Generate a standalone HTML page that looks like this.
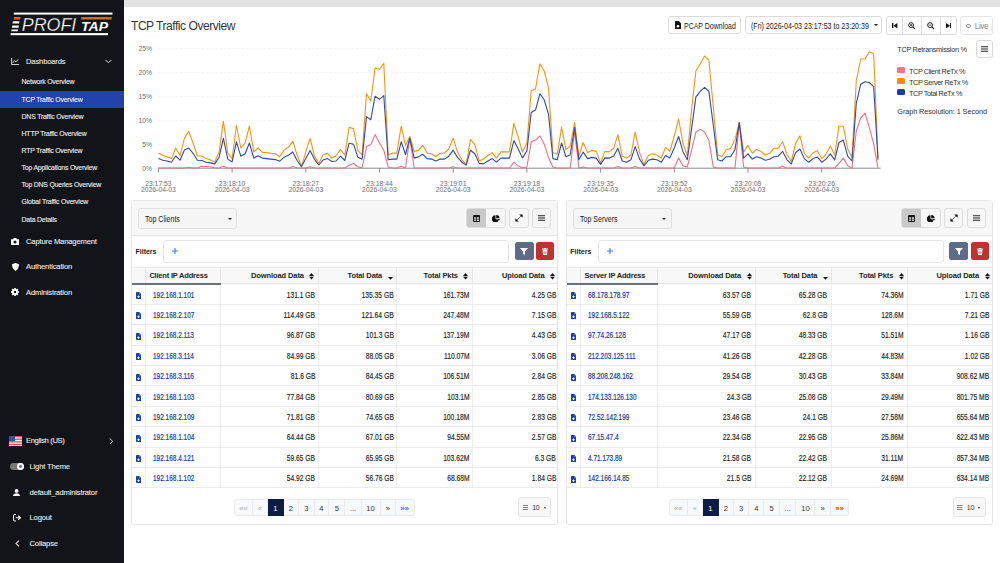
<!DOCTYPE html>
<html><head><meta charset="utf-8"><style>
*{box-sizing:border-box}
html,body{margin:0;padding:0}
body{width:1000px;height:563px;overflow:hidden;position:relative;background:#fff;font-family:"Liberation Sans", sans-serif;color:#333}
.sb{position:absolute;left:0;top:0;width:123.8px;height:563px;background:#131419;color:#ececec}
.sb .it{position:absolute;left:21.6px;font-size:6.9px;letter-spacing:-0.2px;white-space:nowrap;line-height:10px;-webkit-text-stroke:0.12px #ececec}
.sb .mi{position:absolute;left:26px;font-size:7.6px;letter-spacing:-0.15px;white-space:nowrap;line-height:10px;-webkit-text-stroke:0.1px #ececec}
.topstrip{position:absolute;left:123.8px;top:0;width:877px;height:6.6px;background:#e2e2e2}
.title{position:absolute;left:131px;top:16px;font-size:12px;letter-spacing:-0.45px;color:#333;white-space:nowrap;line-height:20px}
.obtn{position:absolute;top:16.3px;height:18px;border:1px solid #dcdcdc;border-radius:3px;background:#fff;font-size:7.9px;color:#222;white-space:nowrap;line-height:16px}
.card{position:absolute;top:200px;height:324.5px;border:1px solid #e7e7e7;border-radius:3px;background:#fff;overflow:hidden}
.chead{position:absolute;left:0;top:0;right:0;height:35.2px;background:#f7f7f7;border-bottom:1px solid #e3e3e3}
.sel{position:absolute;left:6.3px;top:7px;width:98.7px;height:20.5px;border:1px solid #e0e0e0;border-radius:3px;background:#f5f5f5;font-size:8.5px;color:#222;line-height:21.2px;padding-left:5.5px;white-space:nowrap}
.st{display:inline-block;transform:scaleX(0.83);transform-origin:0 50%}
.caret{position:absolute;right:4.6px;top:8.6px;width:0;height:0;border-left:2.2px solid transparent;border-right:2.2px solid transparent;border-top:2.5px solid #222}
.bgrp{position:absolute;left:334px;top:7.2px;width:39.5px;height:19.8px;border:1px solid #dcdcdc;border-radius:3px;overflow:hidden;background:#f7f7f7}
.bgrp .b{position:absolute;top:0;height:100%;width:19px;display:flex;align-items:center;justify-content:center;padding-top:0.5px}
.bgrp .b.act{left:0;background:#c9c9c9}
.bgrp .b:not(.act){left:19px;padding-left:1px}
.btn1{position:absolute;top:7.2px;width:19px;height:19.8px;border:1px solid #dcdcdc;border-radius:3px;display:flex;align-items:center;justify-content:center}
.flab{position:absolute;left:3.3px;top:46.2px;font-size:7px;font-weight:bold;color:#222;line-height:10px}
.finput{position:absolute;left:30.5px;top:39px;height:22.5px;border:1px solid #e6e6e6;border-radius:3px;background:#fff}
.plus{position:absolute;left:8.3px;top:7.4px}
.fbtn{position:absolute;top:41.4px;width:19px;height:17.5px;border-radius:2.5px;background:#5f6b87;display:flex;align-items:center;justify-content:center}
.tbtn{position:absolute;top:41.4px;width:18px;height:17.5px;border-radius:2.5px;background:#c0312f;display:flex;align-items:center;justify-content:center}
.thead{position:absolute;left:0;right:0;top:65.7px;height:17.7px;background:#f8f8f8;border-top:1px solid #ececec;border-bottom:1px solid #e3e3e3}
.th{position:absolute;top:0;height:100%;font-size:7.5px;font-weight:bold;letter-spacing:-0.1px;color:#222;text-align:right;padding-right:13.8px;line-height:16.3px;border-right:1px solid #e6e6e6;white-space:nowrap}
.th.l{text-align:left;padding-left:3.5px;padding-right:0;letter-spacing:-0.2px}
.th.e{padding:0}
.uline{position:absolute;left:0;top:82.3px;height:2px;background:#6a7178}
.tr{position:absolute;left:0;right:0;height:20.4px;border-bottom:1px solid #ebebeb}
.td{position:absolute;top:0;height:100%;border-right:1px solid #efefef;white-space:nowrap;line-height:21px}
.td.ic{display:flex;align-items:center;justify-content:center;padding-top:2.5px;padding-left:0.3px}
.td.ip{font-size:8.2px;color:#22409e;padding-left:6.8px;-webkit-text-stroke:0.2px #22409e}
.td.ip .t{display:inline-block;transform:scaleX(0.79);transform-origin:0 50%}
.td.num{font-size:8.3px;color:#222;text-align:right;padding-right:2.2px;-webkit-text-stroke:0.15px #222}
.card.r .td.num{padding-right:3.9px}
.td.num .t{display:inline-block;transform:scaleX(0.81);transform-origin:100% 50%}
.pag{position:absolute;left:101.8px;top:298px;height:16.6px;width:181px}
.pi{position:absolute;top:0;height:16.6px;background:#f8f9fa;border:1px solid #ececec;border-left:none;font-size:7.6px;color:#333;text-align:center;line-height:17.4px}
.pi.dis{color:#aaa}
.pi.act{background:#0c1c45;color:#fff;border-color:#0c1c45}
.pp{position:absolute;top:296px;width:33px;height:19.8px;background:#f7f7f7;border:1px solid #e6e6e6;border-radius:3px;font-size:7.2px;color:#333;line-height:17px}
.pp svg{position:absolute;left:3.3px;top:6.8px}
.pp span{position:absolute;left:12.8px;top:0.5px;font-size:7px;letter-spacing:-0.2px}
.pp .c2{left:24.5px !important;top:9px !important;width:0;height:0;border-left:1.6px solid transparent;border-right:1.6px solid transparent;border-top:2px solid #333}
.leg{position:absolute;left:909px;font-size:7.3px;letter-spacing:-0.42px;color:#333;white-space:nowrap;line-height:10px}
.sq{position:absolute;left:897.3px;width:7.8px;height:6px;border-radius:1.5px}
</style></head><body>
<div class="sb">
<svg style="position:absolute;left:0;top:0" width="123" height="40" viewBox="0 0 123 40">
<rect x="13.8" y="12.6" width="98.7" height="2" fill="#fff"/>
<path d="M14.2,17.1 H20.6 L20.2,19.4 H13.8 Z" fill="#e8601c"/>
<path d="M81.4,17.1 H111.8 L111.4,19.4 H81 Z" fill="#e8601c"/>
<path d="M12.9,21.3 H19.5 L19.2,23.5 H12.5 Z M12.3,25.6 H18.9 L18.6,27.8 H11.9 Z M11.6,29.4 H18.2 L17.9,31.3 H11.2 Z" fill="#fff"/>
<text x="21.8" y="31.3" font-family='"Liberation Sans", sans-serif' font-style="italic" font-size="18" fill="#fff" stroke="#131419" stroke-width="0.3" textLength="54.5" lengthAdjust="spacingAndGlyphs">PROFI</text>
<text x="81" y="31" font-family='"Liberation Sans", sans-serif' font-style="italic" font-weight="bold" font-size="12" fill="#fff" textLength="27" lengthAdjust="spacingAndGlyphs">TAP</text>
<rect x="10.6" y="33.1" width="97.4" height="2.1" fill="#fff"/>
</svg>
<svg style="position:absolute;left:11px;top:57.7px" width="8" height="7" viewBox="0 0 9 8"><path d="M0.6,0 V7.4 H9" stroke="#ddd" stroke-width="1.1" fill="none"/><path d="M2,5.5 L4,3 L5.6,4.4 L8.2,1.5" stroke="#ddd" stroke-width="1.1" fill="none"/></svg>
<div class="mi" style="top:56.7px">Dashboards</div>
<svg style="position:absolute;left:105.3px;top:59px" width="7" height="5" viewBox="0 0 7 5"><path d="M0.5,0.8 L3.5,3.8 L6.5,0.8" stroke="#ddd" stroke-width="1" fill="none"/></svg>
<div style="position:absolute;left:0;top:90.6px;width:123.8px;height:17.3px;background:#2143ab"></div>
<div class="it" style="top:77.4px">Network Overview</div>
<div class="it" style="top:94.9px">TCP Traffic Overview</div>
<div class="it" style="top:111.9px">DNS Traffic Overview</div>
<div class="it" style="top:129.2px">HTTP Traffic Overview</div>
<div class="it" style="top:146.2px">RTP Traffic Overview</div>
<div class="it" style="top:163.4px">Top Applications Overview</div>
<div class="it" style="top:180.4px">Top DNS Queries Overview</div>
<div class="it" style="top:197.4px">Global Traffic Overview</div>
<div class="it" style="top:214.7px">Data Details</div>
<svg style="position:absolute;left:11px;top:237.5px" width="8" height="7" viewBox="0 0 8 7"><path d="M0,1.8 Q0,1.2 0.6,1.2 H2 L2.8,0 H5.2 L6,1.2 H7.4 Q8,1.2 8,1.8 V6.4 Q8,7 7.4,7 H0.6 Q0,7 0,6.4 Z" fill="#fff"/><circle cx="4" cy="4.1" r="1.5" fill="#131419"/></svg>
<div class="mi" style="top:236.5px">Capture Management</div>
<svg style="position:absolute;left:11.5px;top:262.5px" width="7" height="8" viewBox="0 0 7 8"><path d="M3.5,0 L7,1.3 Q7,6 3.5,8 Q0,6 0,1.3 Z" fill="#fff"/></svg>
<div class="mi" style="top:261.5px">Authentication</div>
<svg style="position:absolute;left:11px;top:288px" width="8" height="8" viewBox="0 0 8 8"><g fill="#fff"><circle cx="4" cy="4" r="2.9"/><rect x="3.2" y="0" width="1.6" height="8"/><rect x="0" y="3.2" width="8" height="1.6"/><rect x="3.2" y="0" width="1.6" height="8" transform="rotate(45 4 4)"/><rect x="3.2" y="0" width="1.6" height="8" transform="rotate(-45 4 4)"/></g><circle cx="4" cy="4" r="1.2" fill="#131419"/></svg>
<div class="mi" style="top:287.5px">Administration</div>
<svg style="position:absolute;left:8.8px;top:435.6px" width="13" height="10.3" viewBox="0 0 13 10.3"><rect width="13" height="10.3" fill="#eee"/><g fill="#d9534f"><rect y="0" width="13" height="1.3"/><rect y="2.6" width="13" height="1.3"/><rect y="5.2" width="13" height="1.3"/><rect y="7.8" width="13" height="1.3"/></g><rect width="6" height="5.2" fill="#3c4f8f"/></svg>
<div class="mi" style="top:436px;letter-spacing:-0.35px">English (US)</div>
<svg style="position:absolute;left:108.6px;top:437.8px" width="4.4" height="6.6" viewBox="0 0 5 7.5"><path d="M0.8,0.6 L4.2,3.75 L0.8,6.9" stroke="#ddd" stroke-width="1.1" fill="none"/></svg>
<div style="position:absolute;left:10.2px;top:463.4px;width:13.8px;height:6.9px;border-radius:3.5px;background:#777"></div>
<div style="position:absolute;left:17.3px;top:463.4px;width:6.9px;height:6.9px;border-radius:50%;background:#fff"></div>
<div style="position:absolute;left:19.3px;top:465.4px;width:2.9px;height:2.9px;border-radius:50%;background:#5a70b0"></div>
<div class="mi" style="left:29.5px;top:462.4px">Light Theme</div>
<svg style="position:absolute;left:13px;top:488.6px" width="7.2" height="7.4" viewBox="0 0 7.2 7.4"><circle cx="3.6" cy="1.9" r="1.9" fill="#fff"/><path d="M0,7.4 Q0,4.3 3.6,4.3 Q7.2,4.3 7.2,7.4 Z" fill="#fff"/></svg>
<div class="mi" style="left:29.5px;top:487.5px">default_administrator</div>
<svg style="position:absolute;left:12.5px;top:514px" width="8.2" height="7.5" viewBox="0 0 8.2 7.5"><path d="M3,0.6 H1.2 Q0.6,0.6 0.6,1.2 V6.3 Q0.6,6.9 1.2,6.9 H3" stroke="#fff" stroke-width="1" fill="none"/><path d="M2.8,3.75 H7.4 M5.2,1.6 L7.4,3.75 L5.2,5.9" stroke="#fff" stroke-width="1.1" fill="none"/></svg>
<div class="mi" style="left:29.5px;top:513px">Logout</div>
<svg style="position:absolute;left:14.5px;top:540px" width="5" height="7" viewBox="0 0 5 7"><path d="M4,0.6 L1,3.5 L4,6.4" stroke="#ddd" stroke-width="1.1" fill="none"/></svg>
<div class="mi" style="left:29.5px;top:538.5px">Collapse</div>
</div>
<div class="topstrip"></div>
<div class="title">TCP Traffic Overview</div>
<div class="obtn" style="left:668.2px;width:73px"><svg style="position:absolute;left:5.5px;top:4px" width="6" height="8" viewBox="0 0 6 8"><path d="M0,0.6 Q0,0 0.6,0 H3.8 L6,2.2 V7.4 Q6,8 5.4,8 H0.6 Q0,8 0,7.4 Z" fill="#111"/><circle cx="3" cy="5.2" r="1.3" fill="#fff"/></svg><span style="position:absolute;left:14.5px;top:0.8px;font-size:9px;transform:scaleX(0.775);transform-origin:0 50%">PCAP Download</span></div>
<div class="obtn" style="left:745.4px;width:136.8px"><span style="position:absolute;left:4.6px;top:0.8px;font-size:9px;transform:scaleX(0.785);transform-origin:0 50%">(Fri) 2026-04-03 23:17:53 to 23:20:39</span><span style="position:absolute;left:128px;top:7px;width:0;height:0;border-left:2.2px solid transparent;border-right:2.2px solid transparent;border-top:2.5px solid #222"></span></div>
<div class="obtn" style="left:886.2px;width:70.4px;height:18.4px">
<div style="position:absolute;left:15.3px;top:0;width:1px;height:16.4px;background:#dcdcdc"></div>
<div style="position:absolute;left:34px;top:0;width:1px;height:16.4px;background:#dcdcdc"></div>
<div style="position:absolute;left:53px;top:0;width:1px;height:16.4px;background:#dcdcdc"></div>
<svg style="position:absolute;left:5px;top:5.6px" width="5.4" height="5.4" viewBox="0 0 6 6"><rect x="0" y="0" width="1.5" height="6" fill="#111"/><path d="M6,0 V6 L1.5,3 Z" fill="#111"/></svg>
<svg style="position:absolute;left:20.6px;top:4.8px" width="7.5" height="7.5" viewBox="0 0 8 8"><circle cx="3.3" cy="3.3" r="2.6" fill="none" stroke="#111" stroke-width="1"/><path d="M5.2,5.2 L7.6,7.6" stroke="#111" stroke-width="1.3"/><path d="M2,3.3 H4.6 M3.3,2 V4.6" stroke="#111" stroke-width="0.8"/></svg>
<svg style="position:absolute;left:39.8px;top:4.8px" width="7.5" height="7.5" viewBox="0 0 8 8"><circle cx="3.3" cy="3.3" r="2.6" fill="none" stroke="#111" stroke-width="1"/><path d="M5.2,5.2 L7.6,7.6" stroke="#111" stroke-width="1.3"/><path d="M2,3.3 H4.6" stroke="#111" stroke-width="0.8"/></svg>
<svg style="position:absolute;left:58.8px;top:5.6px" width="5.4" height="5.4" viewBox="0 0 6 6"><rect x="4.5" y="0" width="1.5" height="6" fill="#111"/><path d="M0,0 V6 L4.5,3 Z" fill="#111"/></svg>
</div>
<div class="obtn" style="left:960.2px;width:32.6px;height:18.4px;border-color:#e4e4e4"><span style="position:absolute;left:5px;top:6.4px;width:4.5px;height:4.5px;border:0.8px solid #999;border-radius:50%"></span><span style="position:absolute;left:13.6px;top:0.7px;color:#8a8a8a;letter-spacing:-0.45px;font-size:8.3px">Live</span></div>
<svg style="position:absolute;left:0;top:0" width="1000" height="200" viewBox="0 0 1000 200">
<g font-family='"Liberation Sans", sans-serif' font-size="6.8" fill="#6e7079"><text x="152" y="170.6" text-anchor="end">0%</text><text x="152" y="146.6" text-anchor="end">5%</text><text x="152" y="122.6" text-anchor="end">10%</text><text x="152" y="98.6" text-anchor="end">15%</text><text x="152" y="74.6" text-anchor="end">20%</text><text x="152" y="50.6" text-anchor="end">25%</text><line x1="158.4" y1="168.2" x2="158.4" y2="172.5" stroke="#6e7079" stroke-width="0.8"/><text x="158.4" y="186" text-anchor="middle">23:17:53</text><text x="158.4" y="192" text-anchor="middle">2026-04-03</text><line x1="232.1" y1="168.2" x2="232.1" y2="172.5" stroke="#6e7079" stroke-width="0.8"/><text x="232.1" y="186" text-anchor="middle">23:18:10</text><text x="232.1" y="192" text-anchor="middle">2026-04-03</text><line x1="305.8" y1="168.2" x2="305.8" y2="172.5" stroke="#6e7079" stroke-width="0.8"/><text x="305.8" y="186" text-anchor="middle">23:18:27</text><text x="305.8" y="192" text-anchor="middle">2026-04-03</text><line x1="379.5" y1="168.2" x2="379.5" y2="172.5" stroke="#6e7079" stroke-width="0.8"/><text x="379.5" y="186" text-anchor="middle">23:18:44</text><text x="379.5" y="192" text-anchor="middle">2026-04-03</text><line x1="453.2" y1="168.2" x2="453.2" y2="172.5" stroke="#6e7079" stroke-width="0.8"/><text x="453.2" y="186" text-anchor="middle">23:19:01</text><text x="453.2" y="192" text-anchor="middle">2026-04-03</text><line x1="526.9" y1="168.2" x2="526.9" y2="172.5" stroke="#6e7079" stroke-width="0.8"/><text x="526.9" y="186" text-anchor="middle">23:19:18</text><text x="526.9" y="192" text-anchor="middle">2026-04-03</text><line x1="600.6" y1="168.2" x2="600.6" y2="172.5" stroke="#6e7079" stroke-width="0.8"/><text x="600.6" y="186" text-anchor="middle">23:19:35</text><text x="600.6" y="192" text-anchor="middle">2026-04-03</text><line x1="674.3" y1="168.2" x2="674.3" y2="172.5" stroke="#6e7079" stroke-width="0.8"/><text x="674.3" y="186" text-anchor="middle">23:19:52</text><text x="674.3" y="192" text-anchor="middle">2026-04-03</text><line x1="748.0" y1="168.2" x2="748.0" y2="172.5" stroke="#6e7079" stroke-width="0.8"/><text x="748.0" y="186" text-anchor="middle">23:20:09</text><text x="748.0" y="192" text-anchor="middle">2026-04-03</text><line x1="821.7" y1="168.2" x2="821.7" y2="172.5" stroke="#6e7079" stroke-width="0.8"/><text x="821.7" y="186" text-anchor="middle">23:20:26</text><text x="821.7" y="192" text-anchor="middle">2026-04-03</text></g>
<line x1="158" y1="144.2" x2="880.5" y2="144.2" stroke="#e6eaf2" stroke-width="0.7" stroke-dasharray="2.2,2.2"/><line x1="158" y1="120.2" x2="880.5" y2="120.2" stroke="#e6eaf2" stroke-width="0.7" stroke-dasharray="2.2,2.2"/><line x1="158" y1="96.2" x2="880.5" y2="96.2" stroke="#e6eaf2" stroke-width="0.7" stroke-dasharray="2.2,2.2"/><line x1="158" y1="72.2" x2="880.5" y2="72.2" stroke="#e6eaf2" stroke-width="0.7" stroke-dasharray="2.2,2.2"/><line x1="158" y1="48.2" x2="880.5" y2="48.2" stroke="#e6eaf2" stroke-width="0.7" stroke-dasharray="2.2,2.2"/>
<line x1="158" y1="168.2" x2="880.5" y2="168.2" stroke="#6e7079" stroke-width="0.8"/>
<path d="M158.4,168.0 L162.7,168.0 L167.1,168.0 L171.4,168.0 L175.7,168.0 L180.1,168.0 L184.4,168.0 L188.7,167.2 L193.1,168.0 L197.4,168.0 L201.8,166.3 L206.1,166.5 L210.4,166.8 L214.8,168.0 L219.1,168.0 L223.4,166.3 L227.8,168.0 L232.1,168.0 L236.4,168.0 L240.8,168.0 L245.1,168.0 L249.4,168.0 L253.8,168.0 L258.1,168.0 L262.4,168.0 L266.8,168.0 L271.1,168.0 L275.4,168.0 L279.8,168.0 L284.1,168.0 L288.5,168.0 L292.8,166.6 L297.1,168.0 L301.5,168.0 L305.8,168.0 L310.1,166.8 L314.5,168.0 L318.8,168.0 L323.1,168.0 L327.5,168.0 L331.8,168.0 L336.1,168.0 L340.5,168.0 L344.8,168.0 L349.1,165.3 L353.5,163.4 L357.8,166.8 L362.1,168.0 L366.5,146.6 L370.8,144.7 L375.1,134.6 L379.5,143.0 L383.8,150.2 L388.2,167.0 L392.5,168.0 L396.8,168.0 L401.2,166.3 L405.5,168.0 L409.8,138.2 L414.2,168.0 L418.5,168.0 L422.8,168.0 L427.2,168.0 L431.5,168.0 L435.8,168.0 L440.2,168.0 L444.5,168.0 L448.8,168.0 L453.2,166.8 L457.5,168.0 L461.9,168.0 L466.2,168.0 L470.5,168.0 L474.9,168.0 L479.2,168.0 L483.5,168.0 L487.9,168.0 L492.2,168.0 L496.5,168.0 L500.9,168.0 L505.2,168.0 L509.5,168.0 L513.9,162.2 L518.2,165.8 L522.5,168.0 L526.9,167.0 L531.2,141.8 L535.5,140.1 L539.9,135.8 L544.2,144.2 L548.5,157.4 L552.9,167.0 L557.2,168.0 L561.6,168.0 L565.9,168.0 L570.2,168.0 L574.6,131.0 L578.9,168.0 L583.2,167.0 L587.6,168.0 L591.9,168.0 L596.2,168.0 L600.6,168.0 L604.9,168.0 L609.2,168.0 L613.6,168.0 L617.9,166.5 L622.2,168.0 L626.6,168.0 L630.9,168.0 L635.2,166.5 L639.6,168.0 L643.9,168.0 L648.3,168.0 L652.6,168.0 L656.9,168.0 L661.3,168.0 L665.6,168.0 L669.9,168.0 L674.3,168.0 L678.6,157.9 L682.9,165.8 L687.3,167.0 L691.6,150.2 L695.9,132.2 L700.3,129.1 L704.6,132.2 L708.9,140.6 L713.3,167.0 L717.6,168.0 L721.9,168.0 L726.3,168.0 L730.6,168.0 L735.0,168.0 L739.3,122.6 L743.6,167.0 L748.0,168.0 L752.3,168.0 L756.6,168.0 L761.0,168.0 L765.3,168.0 L769.6,168.0 L774.0,168.0 L778.3,168.0 L782.6,166.3 L787.0,168.0 L791.3,168.0 L795.6,168.0 L800.0,168.0 L804.3,168.0 L808.6,168.0 L813.0,168.0 L817.3,168.0 L821.7,168.0 L826.0,168.0 L830.3,168.0 L834.7,168.0 L839.0,163.4 L843.3,158.1 L847.7,165.8 L852.0,168.0 L856.3,131.0 L860.7,117.8 L865.0,113.0 L869.3,127.4 L873.7,144.2 L878.0,168.2" fill="none" stroke="#f0707e" stroke-width="1.1" stroke-linejoin="round"/>
<path d="M158.4,153.0 L162.7,155.2 L167.1,156.7 L171.4,158.6 L175.7,148.0 L180.1,155.7 L184.4,138.4 L188.7,131.2 L193.1,143.2 L197.4,156.0 L201.8,156.0 L206.1,158.6 L210.4,160.0 L214.8,162.0 L219.1,151.9 L223.4,121.2 L227.8,153.3 L232.1,158.6 L236.4,125.5 L240.8,148.0 L245.1,143.2 L249.4,126.0 L253.8,151.9 L258.1,148.0 L262.4,152.4 L266.8,152.6 L271.1,153.3 L275.4,153.8 L279.8,156.7 L284.1,150.0 L288.5,147.1 L292.8,141.3 L297.1,154.8 L301.5,166.6 L305.8,151.9 L310.1,138.4 L314.5,156.0 L318.8,163.4 L323.1,154.8 L327.5,153.3 L331.8,158.1 L336.1,156.0 L340.5,149.5 L344.8,155.2 L349.1,127.4 L353.5,128.6 L357.8,150.4 L362.1,154.8 L366.5,93.8 L370.8,101.0 L375.1,68.1 L379.5,69.3 L383.8,63.3 L388.2,155.0 L392.5,153.1 L396.8,153.1 L401.2,126.2 L405.5,145.4 L409.8,136.5 L414.2,151.4 L418.5,150.2 L422.8,145.4 L427.2,153.1 L431.5,153.8 L435.8,156.7 L440.2,153.3 L444.5,153.1 L448.8,149.0 L453.2,138.2 L457.5,152.1 L461.9,159.8 L466.2,164.1 L470.5,139.4 L474.9,144.7 L479.2,161.0 L483.5,159.1 L487.9,155.5 L492.2,152.6 L496.5,158.1 L500.9,151.9 L505.2,151.9 L509.5,151.9 L513.9,123.3 L518.2,137.0 L522.5,152.1 L526.9,143.0 L531.2,90.9 L535.5,89.0 L539.9,63.8 L544.2,71.0 L548.5,87.8 L552.9,152.6 L557.2,154.3 L561.6,127.4 L565.9,149.7 L570.2,146.1 L574.6,122.6 L578.9,156.2 L583.2,142.5 L587.6,152.6 L591.9,150.4 L596.2,151.4 L600.6,162.9 L604.9,151.4 L609.2,151.9 L613.6,148.3 L617.9,134.6 L622.2,156.2 L626.6,158.1 L630.9,155.0 L635.2,132.2 L639.6,152.6 L643.9,164.6 L648.3,155.5 L652.6,153.8 L656.9,155.0 L661.3,158.1 L665.6,147.3 L669.9,151.4 L674.3,135.8 L678.6,119.0 L682.9,143.0 L687.3,155.7 L691.6,109.4 L695.9,71.0 L700.3,63.8 L704.6,56.1 L708.9,60.2 L713.3,107.2 L717.6,154.5 L721.9,156.7 L726.3,149.7 L730.6,148.5 L735.0,139.4 L739.3,122.6 L743.6,152.1 L748.0,145.4 L752.3,153.1 L756.6,149.5 L761.0,151.4 L765.3,155.0 L769.6,153.3 L774.0,148.3 L778.3,148.3 L782.6,141.8 L787.0,154.5 L791.3,161.5 L795.6,143.5 L800.0,135.8 L804.3,153.3 L808.6,158.1 L813.0,152.8 L817.3,150.7 L821.7,158.6 L826.0,154.5 L830.3,146.1 L834.7,155.0 L839.0,126.2 L843.3,126.2 L847.7,149.0 L852.0,157.4 L856.3,80.6 L860.7,59.0 L865.0,59.0 L869.3,51.8 L873.7,53.7 L878.0,157.4" fill="none" stroke="#f39516" stroke-width="1.1" stroke-linejoin="round"/>
<path d="M158.4,158.6 L162.7,160.2 L167.1,161.0 L171.4,162.2 L175.7,156.0 L180.1,160.2 L184.4,150.0 L188.7,148.0 L193.1,153.3 L197.4,160.2 L201.8,160.5 L206.1,162.2 L210.4,162.9 L214.8,163.9 L219.1,157.2 L223.4,138.4 L227.8,159.1 L232.1,162.0 L236.4,141.8 L240.8,156.2 L245.1,153.8 L249.4,143.0 L253.8,158.1 L258.1,155.7 L262.4,158.1 L266.8,158.6 L271.1,159.1 L275.4,159.6 L279.8,161.2 L284.1,157.2 L288.5,155.2 L292.8,151.9 L297.1,160.5 L301.5,166.6 L305.8,158.6 L310.1,150.4 L314.5,159.3 L318.8,165.0 L323.1,160.0 L327.5,158.6 L331.8,161.5 L336.1,161.0 L340.5,156.2 L344.8,160.5 L349.1,143.2 L353.5,144.2 L357.8,157.2 L362.1,159.1 L366.5,116.6 L370.8,119.7 L375.1,96.2 L379.5,99.3 L383.8,95.7 L388.2,159.8 L392.5,159.1 L396.8,159.1 L401.2,141.8 L405.5,154.5 L409.8,138.2 L414.2,158.1 L418.5,156.9 L422.8,154.3 L427.2,158.6 L431.5,159.1 L435.8,161.0 L440.2,159.1 L444.5,159.1 L448.8,156.2 L453.2,150.2 L457.5,157.4 L461.9,162.2 L466.2,165.1 L470.5,150.2 L474.9,153.8 L479.2,163.4 L483.5,163.9 L487.9,161.0 L492.2,158.6 L496.5,162.2 L500.9,158.1 L505.2,158.1 L509.5,158.1 L513.9,140.6 L518.2,149.0 L522.5,157.9 L526.9,150.9 L531.2,112.5 L535.5,110.1 L539.9,93.8 L544.2,99.8 L548.5,114.2 L552.9,158.6 L557.2,159.8 L561.6,143.0 L565.9,156.7 L570.2,155.0 L574.6,127.4 L578.9,159.8 L583.2,152.1 L587.6,158.6 L591.9,157.4 L596.2,158.1 L600.6,164.4 L604.9,157.9 L609.2,158.1 L613.6,156.2 L617.9,148.3 L622.2,161.0 L626.6,162.2 L630.9,159.8 L635.2,146.6 L639.6,159.1 L643.9,165.8 L648.3,160.3 L652.6,159.1 L656.9,159.8 L661.3,162.2 L665.6,155.5 L669.9,157.9 L674.3,147.8 L678.6,136.5 L682.9,151.4 L687.3,159.8 L691.6,128.6 L695.9,96.9 L700.3,91.4 L704.6,87.3 L708.9,91.4 L713.3,125.2 L717.6,159.8 L721.9,161.0 L726.3,156.7 L730.6,156.7 L735.0,149.7 L739.3,122.6 L743.6,158.1 L748.0,153.8 L752.3,159.1 L756.6,156.7 L761.0,158.1 L765.3,160.3 L769.6,159.3 L774.0,156.7 L778.3,156.2 L782.6,151.4 L787.0,159.8 L791.3,163.9 L795.6,152.6 L800.0,149.0 L804.3,158.6 L808.6,162.2 L813.0,158.6 L817.3,156.9 L821.7,162.2 L826.0,159.1 L830.3,153.8 L834.7,159.8 L839.0,142.5 L843.3,140.1 L847.7,156.2 L852.0,161.0 L856.3,103.4 L860.7,84.2 L865.0,81.8 L869.3,82.5 L873.7,86.6 L878.0,159.8" fill="none" stroke="#2e4aa6" stroke-width="1.1" stroke-linejoin="round"/>
</svg>
<div class="leg" style="left:897.3px;top:44.8px;letter-spacing:-0.3px">TCP Retransmission %</div>
<div style="position:absolute;left:975.5px;top:40.4px;width:17.2px;height:17.2px;border:1px solid #d8d8d8;border-radius:3px;background:#fff"><svg style="position:absolute;left:4.3px;top:4.6px" width="7" height="6" viewBox="0 0 7 6"><path d="M0,0.7 H7 M0,3 H7 M0,5.3 H7" stroke="#222" stroke-width="1.1"/></svg></div>
<div class="sq" style="top:67.4px;background:#f57586"></div>
<div class="sq" style="top:78.4px;background:#ff8a00"></div>
<div class="sq" style="top:89.3px;background:#1f3aa0"></div>
<div class="leg" style="top:67.2px">TCP Client ReTx %</div>
<div class="leg" style="top:77.9px">TCP Server ReTx %</div>
<div class="leg" style="top:88.5px">TCP Total ReTx %</div>
<div class="leg" style="left:897.3px;top:107.2px;letter-spacing:-0.08px">Graph Resolution: 1 Second</div>
<div class="card" style="left:131.2px;width:427.2px"><div class="chead"><div class="sel"><span class="st">Top Clients</span><span class="caret"></span></div><div class="bgrp"><div class="b act"><svg width="7.2" height="7" viewBox="0 0 7.2 7"><rect x="0" y="0" width="7.2" height="7" rx="1.2" fill="#151515"/><g fill="#c9c9c9"><rect x="1.1" y="2.2" width="2.1" height="1.7"/><rect x="4" y="2.2" width="2.1" height="1.7"/><rect x="1.1" y="4.4" width="2.1" height="1.6"/><rect x="4" y="4.4" width="2.1" height="1.6"/></g></svg></div><div class="b"><svg width="8" height="7.6" viewBox="0 0 8 7.6"><path d="M3.5,0.3 A3.6,3.6 0 1 0 6.6,5.6 L3.5,3.8 Z" fill="#111"/><path d="M4.2,0 A3.6,3.6 0 0 1 7.6,3.2 L4.2,3.2 Z" fill="#111"/><path d="M4.5,3.9 L7.8,3.9 A3.6,3.6 0 0 1 7.1,5.6 Z" fill="#111"/></svg></div></div><div class="btn1" style="left:377px;width:19.4px"><svg width="8" height="8" viewBox="0 0 8 8"><path d="M4.2,0.4 L7.6,0.4 L7.6,3.8 Z M0.4,4.2 L0.4,7.6 L3.8,7.6 Z" fill="#111"/><path d="M4.4,3.6 L5.6,2.4 M2.4,5.6 L3.6,4.4" stroke="#111" stroke-width="1"/></svg></div><div class="btn1" style="left:400px"><svg width="7" height="6" viewBox="0 0 7 6"><path d="M0,0.7 H7 M0,3 H7 M0,5.3 H7" stroke="#222" stroke-width="1.1"/></svg></div></div><div class="flab">Filters</div><div class="finput" style="width:346.7px"><svg class="plus" width="6" height="6" viewBox="0 0 6 6"><path d="M3,0 V6 M0,3 H6" stroke="#2f7ff0" stroke-width="1.1"/></svg></div><div class="fbtn" style="left:382.7px"><svg width="8" height="7" viewBox="0 0 8 7"><path d="M0,0 H8 L5,3.4 V7 L3,6 V3.4 Z" fill="#fff"/></svg></div><div class="tbtn" style="left:404.0px"><svg width="6" height="7" viewBox="0 0 6 7"><path d="M0,1 H6 M2,0.5 H4" stroke="#fff" stroke-width="1"/><path d="M0.6,1.8 H5.4 L5,7 H1 Z" fill="#fff"/><path d="M2.2,3 V6 M3.8,3 V6" stroke="#c0312f" stroke-width="0.6"/></svg></div><div class="thead"><div class="th e" style="left:0px;width:13.7px"></div><div class="th l" style="left:13.7px;width:74.89999999999999px">Client IP Address</div><div class="th" style="left:88.6px;width:97.9px">Download Data<svg width="5" height="7" viewBox="0 0 5 7" style="position:absolute;right:3.4px;top:5.8px"><path d="M0,3.1 L5,3.1 L2.5,0 Z M0,3.7 L5,3.7 L2.5,6.6 Z" fill="#111"/></svg></div><div class="th" style="left:186.5px;width:78.30000000000001px">Total Data<svg width="5" height="3" viewBox="0 0 5 3" style="position:absolute;right:3.4px;top:9px"><path d="M0,0 L5,0 L2.5,2.8 Z" fill="#111"/></svg></div><div class="th" style="left:264.8px;width:75.69999999999999px">Total Pkts<svg width="5" height="7" viewBox="0 0 5 7" style="position:absolute;right:3.4px;top:5.8px"><path d="M0,3.1 L5,3.1 L2.5,0 Z M0,3.7 L5,3.7 L2.5,6.6 Z" fill="#111"/></svg></div><div class="th" style="left:340.5px;width:86.69999999999999px">Upload Data<svg width="5" height="7" viewBox="0 0 5 7" style="position:absolute;right:3.4px;top:5.8px"><path d="M0,3.1 L5,3.1 L2.5,0 Z M0,3.7 L5,3.7 L2.5,6.6 Z" fill="#111"/></svg></div></div><div class="uline" style="width:88.6px"></div><div class="tr" style="top:83.5px"><div class="td ic" style="left:0;width:13.7px"><svg width="5.6" height="7" viewBox="0 0 6 7.5"><path d="M0,0.7 Q0,0 0.7,0 H3.6 L6,2.4 V6.8 Q6,7.5 5.3,7.5 H0.7 Q0,7.5 0,6.8 Z" fill="#1d3fae"/><path d="M3.6,0.3 V2.4 H5.7 Z" fill="#7d92d0"/><path d="M2.7,3.7 V6.3 M1.4,5 H4" stroke="#fff" stroke-width="1.1"/></svg></div><div class="td ip" style="left:13.7px;width:74.89999999999999px"><span class="t">192.168.1.101</span></div><div class="td num" style="left:88.6px;width:97.9px"><span class="t">131.1 GB</span></div><div class="td num" style="left:186.5px;width:78.30000000000001px"><span class="t">135.35 GB</span></div><div class="td num" style="left:264.8px;width:75.69999999999999px"><span class="t">161.73M</span></div><div class="td num" style="left:340.5px;width:86.69999999999999px"><span class="t">4.25 GB</span></div></div><div class="tr" style="top:103.9px"><div class="td ic" style="left:0;width:13.7px"><svg width="5.6" height="7" viewBox="0 0 6 7.5"><path d="M0,0.7 Q0,0 0.7,0 H3.6 L6,2.4 V6.8 Q6,7.5 5.3,7.5 H0.7 Q0,7.5 0,6.8 Z" fill="#1d3fae"/><path d="M3.6,0.3 V2.4 H5.7 Z" fill="#7d92d0"/><path d="M2.7,3.7 V6.3 M1.4,5 H4" stroke="#fff" stroke-width="1.1"/></svg></div><div class="td ip" style="left:13.7px;width:74.89999999999999px"><span class="t">192.168.2.107</span></div><div class="td num" style="left:88.6px;width:97.9px"><span class="t">114.49 GB</span></div><div class="td num" style="left:186.5px;width:78.30000000000001px"><span class="t">121.64 GB</span></div><div class="td num" style="left:264.8px;width:75.69999999999999px"><span class="t">247.48M</span></div><div class="td num" style="left:340.5px;width:86.69999999999999px"><span class="t">7.15 GB</span></div></div><div class="tr" style="top:124.3px"><div class="td ic" style="left:0;width:13.7px"><svg width="5.6" height="7" viewBox="0 0 6 7.5"><path d="M0,0.7 Q0,0 0.7,0 H3.6 L6,2.4 V6.8 Q6,7.5 5.3,7.5 H0.7 Q0,7.5 0,6.8 Z" fill="#1d3fae"/><path d="M3.6,0.3 V2.4 H5.7 Z" fill="#7d92d0"/><path d="M2.7,3.7 V6.3 M1.4,5 H4" stroke="#fff" stroke-width="1.1"/></svg></div><div class="td ip" style="left:13.7px;width:74.89999999999999px"><span class="t">192.168.2.113</span></div><div class="td num" style="left:88.6px;width:97.9px"><span class="t">96.87 GB</span></div><div class="td num" style="left:186.5px;width:78.30000000000001px"><span class="t">101.3 GB</span></div><div class="td num" style="left:264.8px;width:75.69999999999999px"><span class="t">137.19M</span></div><div class="td num" style="left:340.5px;width:86.69999999999999px"><span class="t">4.43 GB</span></div></div><div class="tr" style="top:144.7px"><div class="td ic" style="left:0;width:13.7px"><svg width="5.6" height="7" viewBox="0 0 6 7.5"><path d="M0,0.7 Q0,0 0.7,0 H3.6 L6,2.4 V6.8 Q6,7.5 5.3,7.5 H0.7 Q0,7.5 0,6.8 Z" fill="#1d3fae"/><path d="M3.6,0.3 V2.4 H5.7 Z" fill="#7d92d0"/><path d="M2.7,3.7 V6.3 M1.4,5 H4" stroke="#fff" stroke-width="1.1"/></svg></div><div class="td ip" style="left:13.7px;width:74.89999999999999px"><span class="t">192.168.3.114</span></div><div class="td num" style="left:88.6px;width:97.9px"><span class="t">84.99 GB</span></div><div class="td num" style="left:186.5px;width:78.30000000000001px"><span class="t">88.05 GB</span></div><div class="td num" style="left:264.8px;width:75.69999999999999px"><span class="t">110.07M</span></div><div class="td num" style="left:340.5px;width:86.69999999999999px"><span class="t">3.06 GB</span></div></div><div class="tr" style="top:165.1px"><div class="td ic" style="left:0;width:13.7px"><svg width="5.6" height="7" viewBox="0 0 6 7.5"><path d="M0,0.7 Q0,0 0.7,0 H3.6 L6,2.4 V6.8 Q6,7.5 5.3,7.5 H0.7 Q0,7.5 0,6.8 Z" fill="#1d3fae"/><path d="M3.6,0.3 V2.4 H5.7 Z" fill="#7d92d0"/><path d="M2.7,3.7 V6.3 M1.4,5 H4" stroke="#fff" stroke-width="1.1"/></svg></div><div class="td ip" style="left:13.7px;width:74.89999999999999px"><span class="t">192.168.3.116</span></div><div class="td num" style="left:88.6px;width:97.9px"><span class="t">81.6 GB</span></div><div class="td num" style="left:186.5px;width:78.30000000000001px"><span class="t">84.45 GB</span></div><div class="td num" style="left:264.8px;width:75.69999999999999px"><span class="t">106.51M</span></div><div class="td num" style="left:340.5px;width:86.69999999999999px"><span class="t">2.84 GB</span></div></div><div class="tr" style="top:185.5px"><div class="td ic" style="left:0;width:13.7px"><svg width="5.6" height="7" viewBox="0 0 6 7.5"><path d="M0,0.7 Q0,0 0.7,0 H3.6 L6,2.4 V6.8 Q6,7.5 5.3,7.5 H0.7 Q0,7.5 0,6.8 Z" fill="#1d3fae"/><path d="M3.6,0.3 V2.4 H5.7 Z" fill="#7d92d0"/><path d="M2.7,3.7 V6.3 M1.4,5 H4" stroke="#fff" stroke-width="1.1"/></svg></div><div class="td ip" style="left:13.7px;width:74.89999999999999px"><span class="t">192.168.1.103</span></div><div class="td num" style="left:88.6px;width:97.9px"><span class="t">77.84 GB</span></div><div class="td num" style="left:186.5px;width:78.30000000000001px"><span class="t">80.69 GB</span></div><div class="td num" style="left:264.8px;width:75.69999999999999px"><span class="t">103.1M</span></div><div class="td num" style="left:340.5px;width:86.69999999999999px"><span class="t">2.85 GB</span></div></div><div class="tr" style="top:205.9px"><div class="td ic" style="left:0;width:13.7px"><svg width="5.6" height="7" viewBox="0 0 6 7.5"><path d="M0,0.7 Q0,0 0.7,0 H3.6 L6,2.4 V6.8 Q6,7.5 5.3,7.5 H0.7 Q0,7.5 0,6.8 Z" fill="#1d3fae"/><path d="M3.6,0.3 V2.4 H5.7 Z" fill="#7d92d0"/><path d="M2.7,3.7 V6.3 M1.4,5 H4" stroke="#fff" stroke-width="1.1"/></svg></div><div class="td ip" style="left:13.7px;width:74.89999999999999px"><span class="t">192.168.2.109</span></div><div class="td num" style="left:88.6px;width:97.9px"><span class="t">71.81 GB</span></div><div class="td num" style="left:186.5px;width:78.30000000000001px"><span class="t">74.65 GB</span></div><div class="td num" style="left:264.8px;width:75.69999999999999px"><span class="t">100.18M</span></div><div class="td num" style="left:340.5px;width:86.69999999999999px"><span class="t">2.83 GB</span></div></div><div class="tr" style="top:226.3px"><div class="td ic" style="left:0;width:13.7px"><svg width="5.6" height="7" viewBox="0 0 6 7.5"><path d="M0,0.7 Q0,0 0.7,0 H3.6 L6,2.4 V6.8 Q6,7.5 5.3,7.5 H0.7 Q0,7.5 0,6.8 Z" fill="#1d3fae"/><path d="M3.6,0.3 V2.4 H5.7 Z" fill="#7d92d0"/><path d="M2.7,3.7 V6.3 M1.4,5 H4" stroke="#fff" stroke-width="1.1"/></svg></div><div class="td ip" style="left:13.7px;width:74.89999999999999px"><span class="t">192.168.1.104</span></div><div class="td num" style="left:88.6px;width:97.9px"><span class="t">64.44 GB</span></div><div class="td num" style="left:186.5px;width:78.30000000000001px"><span class="t">67.01 GB</span></div><div class="td num" style="left:264.8px;width:75.69999999999999px"><span class="t">94.55M</span></div><div class="td num" style="left:340.5px;width:86.69999999999999px"><span class="t">2.57 GB</span></div></div><div class="tr" style="top:246.7px"><div class="td ic" style="left:0;width:13.7px"><svg width="5.6" height="7" viewBox="0 0 6 7.5"><path d="M0,0.7 Q0,0 0.7,0 H3.6 L6,2.4 V6.8 Q6,7.5 5.3,7.5 H0.7 Q0,7.5 0,6.8 Z" fill="#1d3fae"/><path d="M3.6,0.3 V2.4 H5.7 Z" fill="#7d92d0"/><path d="M2.7,3.7 V6.3 M1.4,5 H4" stroke="#fff" stroke-width="1.1"/></svg></div><div class="td ip" style="left:13.7px;width:74.89999999999999px"><span class="t">192.168.4.121</span></div><div class="td num" style="left:88.6px;width:97.9px"><span class="t">59.65 GB</span></div><div class="td num" style="left:186.5px;width:78.30000000000001px"><span class="t">65.95 GB</span></div><div class="td num" style="left:264.8px;width:75.69999999999999px"><span class="t">103.62M</span></div><div class="td num" style="left:340.5px;width:86.69999999999999px"><span class="t">6.3 GB</span></div></div><div class="tr" style="top:267.1px"><div class="td ic" style="left:0;width:13.7px"><svg width="5.6" height="7" viewBox="0 0 6 7.5"><path d="M0,0.7 Q0,0 0.7,0 H3.6 L6,2.4 V6.8 Q6,7.5 5.3,7.5 H0.7 Q0,7.5 0,6.8 Z" fill="#1d3fae"/><path d="M3.6,0.3 V2.4 H5.7 Z" fill="#7d92d0"/><path d="M2.7,3.7 V6.3 M1.4,5 H4" stroke="#fff" stroke-width="1.1"/></svg></div><div class="td ip" style="left:13.7px;width:74.89999999999999px"><span class="t">192.168.1.102</span></div><div class="td num" style="left:88.6px;width:97.9px"><span class="t">54.92 GB</span></div><div class="td num" style="left:186.5px;width:78.30000000000001px"><span class="t">56.76 GB</span></div><div class="td num" style="left:264.8px;width:75.69999999999999px"><span class="t">68.68M</span></div><div class="td num" style="left:340.5px;width:86.69999999999999px"><span class="t">1.84 GB</span></div></div><div class="pag"><div class="pi dis" style="left:0.0px;width:19px;border-left:1px solid #ececec;border-radius:3px 0 0 3px;">««</div><div class="pi dis" style="left:19.0px;width:15px;">«</div><div class="pi act" style="left:34.0px;width:16px;">1</div><div class="pi " style="left:50.0px;width:15px;">2</div><div class="pi " style="left:65.0px;width:15.6px;">3</div><div class="pi " style="left:80.6px;width:14.8px;">4</div><div class="pi " style="left:95.4px;width:16px;">5</div><div class="pi " style="left:111.4px;width:16.2px;">...</div><div class="pi " style="left:127.6px;width:19px;">10</div><div class="pi " style="left:146.6px;width:15.4px;">»</div><div class="pi " style="left:162.0px;width:18.6px;border-radius:0 3px 3px 0;">»»</div></div><div class="pp" style="left:386.2px"><svg width="5.5" height="5" viewBox="0 0 5.5 5"><path d="M0,0.5 H5.5 M0,2.5 H5.5 M0,4.5 H5.5" stroke="#666" stroke-width="0.8"/></svg><span>10</span><span class="c2"></span></div></div>
<div class="card r" style="left:566px;width:426.9px"><div class="chead"><div class="sel"><span class="st">Top Servers</span><span class="caret"></span></div><div class="bgrp"><div class="b act"><svg width="7.2" height="7" viewBox="0 0 7.2 7"><rect x="0" y="0" width="7.2" height="7" rx="1.2" fill="#151515"/><g fill="#c9c9c9"><rect x="1.1" y="2.2" width="2.1" height="1.7"/><rect x="4" y="2.2" width="2.1" height="1.7"/><rect x="1.1" y="4.4" width="2.1" height="1.6"/><rect x="4" y="4.4" width="2.1" height="1.6"/></g></svg></div><div class="b"><svg width="8" height="7.6" viewBox="0 0 8 7.6"><path d="M3.5,0.3 A3.6,3.6 0 1 0 6.6,5.6 L3.5,3.8 Z" fill="#111"/><path d="M4.2,0 A3.6,3.6 0 0 1 7.6,3.2 L4.2,3.2 Z" fill="#111"/><path d="M4.5,3.9 L7.8,3.9 A3.6,3.6 0 0 1 7.1,5.6 Z" fill="#111"/></svg></div></div><div class="btn1" style="left:377px;width:19.4px"><svg width="8" height="8" viewBox="0 0 8 8"><path d="M4.2,0.4 L7.6,0.4 L7.6,3.8 Z M0.4,4.2 L0.4,7.6 L3.8,7.6 Z" fill="#111"/><path d="M4.4,3.6 L5.6,2.4 M2.4,5.6 L3.6,4.4" stroke="#111" stroke-width="1"/></svg></div><div class="btn1" style="left:400px"><svg width="7" height="6" viewBox="0 0 7 6"><path d="M0,0.7 H7 M0,3 H7 M0,5.3 H7" stroke="#222" stroke-width="1.1"/></svg></div></div><div class="flab">Filters</div><div class="finput" style="width:346.4px"><svg class="plus" width="6" height="6" viewBox="0 0 6 6"><path d="M3,0 V6 M0,3 H6" stroke="#2f7ff0" stroke-width="1.1"/></svg></div><div class="fbtn" style="left:382.4px"><svg width="8" height="7" viewBox="0 0 8 7"><path d="M0,0 H8 L5,3.4 V7 L3,6 V3.4 Z" fill="#fff"/></svg></div><div class="tbtn" style="left:403.7px"><svg width="6" height="7" viewBox="0 0 6 7"><path d="M0,1 H6 M2,0.5 H4" stroke="#fff" stroke-width="1"/><path d="M0.6,1.8 H5.4 L5,7 H1 Z" fill="#fff"/><path d="M2.2,3 V6 M3.8,3 V6" stroke="#c0312f" stroke-width="0.6"/></svg></div><div class="thead"><div class="th e" style="left:0px;width:14px"></div><div class="th l" style="left:14px;width:77px">Server IP Address</div><div class="th" style="left:91px;width:97.9px">Download Data<svg width="5" height="7" viewBox="0 0 5 7" style="position:absolute;right:3.4px;top:5.8px"><path d="M0,3.1 L5,3.1 L2.5,0 Z M0,3.7 L5,3.7 L2.5,6.6 Z" fill="#111"/></svg></div><div class="th" style="left:188.9px;width:76.29999999999998px">Total Data<svg width="5" height="3" viewBox="0 0 5 3" style="position:absolute;right:3.4px;top:9px"><path d="M0,0 L5,0 L2.5,2.8 Z" fill="#111"/></svg></div><div class="th" style="left:265.2px;width:75.90000000000003px">Total Pkts<svg width="5" height="7" viewBox="0 0 5 7" style="position:absolute;right:3.4px;top:5.8px"><path d="M0,3.1 L5,3.1 L2.5,0 Z M0,3.7 L5,3.7 L2.5,6.6 Z" fill="#111"/></svg></div><div class="th" style="left:341.1px;width:85.79999999999995px">Upload Data<svg width="5" height="7" viewBox="0 0 5 7" style="position:absolute;right:3.4px;top:5.8px"><path d="M0,3.1 L5,3.1 L2.5,0 Z M0,3.7 L5,3.7 L2.5,6.6 Z" fill="#111"/></svg></div></div><div class="uline" style="width:91px"></div><div class="tr" style="top:83.5px"><div class="td ic" style="left:0;width:14px"><svg width="5.6" height="7" viewBox="0 0 6 7.5"><path d="M0,0.7 Q0,0 0.7,0 H3.6 L6,2.4 V6.8 Q6,7.5 5.3,7.5 H0.7 Q0,7.5 0,6.8 Z" fill="#1d3fae"/><path d="M3.6,0.3 V2.4 H5.7 Z" fill="#7d92d0"/><path d="M2.7,3.7 V6.3 M1.4,5 H4" stroke="#fff" stroke-width="1.1"/></svg></div><div class="td ip" style="left:14px;width:77px"><span class="t">68.178.178.97</span></div><div class="td num" style="left:91px;width:97.9px"><span class="t">63.57 GB</span></div><div class="td num" style="left:188.9px;width:76.29999999999998px"><span class="t">65.28 GB</span></div><div class="td num" style="left:265.2px;width:75.90000000000003px"><span class="t">74.36M</span></div><div class="td num" style="left:341.1px;width:85.79999999999995px"><span class="t">1.71 GB</span></div></div><div class="tr" style="top:103.9px"><div class="td ic" style="left:0;width:14px"><svg width="5.6" height="7" viewBox="0 0 6 7.5"><path d="M0,0.7 Q0,0 0.7,0 H3.6 L6,2.4 V6.8 Q6,7.5 5.3,7.5 H0.7 Q0,7.5 0,6.8 Z" fill="#1d3fae"/><path d="M3.6,0.3 V2.4 H5.7 Z" fill="#7d92d0"/><path d="M2.7,3.7 V6.3 M1.4,5 H4" stroke="#fff" stroke-width="1.1"/></svg></div><div class="td ip" style="left:14px;width:77px"><span class="t">192.168.5.122</span></div><div class="td num" style="left:91px;width:97.9px"><span class="t">55.59 GB</span></div><div class="td num" style="left:188.9px;width:76.29999999999998px"><span class="t">62.8 GB</span></div><div class="td num" style="left:265.2px;width:75.90000000000003px"><span class="t">128.6M</span></div><div class="td num" style="left:341.1px;width:85.79999999999995px"><span class="t">7.21 GB</span></div></div><div class="tr" style="top:124.3px"><div class="td ic" style="left:0;width:14px"><svg width="5.6" height="7" viewBox="0 0 6 7.5"><path d="M0,0.7 Q0,0 0.7,0 H3.6 L6,2.4 V6.8 Q6,7.5 5.3,7.5 H0.7 Q0,7.5 0,6.8 Z" fill="#1d3fae"/><path d="M3.6,0.3 V2.4 H5.7 Z" fill="#7d92d0"/><path d="M2.7,3.7 V6.3 M1.4,5 H4" stroke="#fff" stroke-width="1.1"/></svg></div><div class="td ip" style="left:14px;width:77px"><span class="t">97.74.26.128</span></div><div class="td num" style="left:91px;width:97.9px"><span class="t">47.17 GB</span></div><div class="td num" style="left:188.9px;width:76.29999999999998px"><span class="t">48.33 GB</span></div><div class="td num" style="left:265.2px;width:75.90000000000003px"><span class="t">51.51M</span></div><div class="td num" style="left:341.1px;width:85.79999999999995px"><span class="t">1.16 GB</span></div></div><div class="tr" style="top:144.7px"><div class="td ic" style="left:0;width:14px"><svg width="5.6" height="7" viewBox="0 0 6 7.5"><path d="M0,0.7 Q0,0 0.7,0 H3.6 L6,2.4 V6.8 Q6,7.5 5.3,7.5 H0.7 Q0,7.5 0,6.8 Z" fill="#1d3fae"/><path d="M3.6,0.3 V2.4 H5.7 Z" fill="#7d92d0"/><path d="M2.7,3.7 V6.3 M1.4,5 H4" stroke="#fff" stroke-width="1.1"/></svg></div><div class="td ip" style="left:14px;width:77px"><span class="t">212.203.125.111</span></div><div class="td num" style="left:91px;width:97.9px"><span class="t">41.26 GB</span></div><div class="td num" style="left:188.9px;width:76.29999999999998px"><span class="t">42.28 GB</span></div><div class="td num" style="left:265.2px;width:75.90000000000003px"><span class="t">44.83M</span></div><div class="td num" style="left:341.1px;width:85.79999999999995px"><span class="t">1.02 GB</span></div></div><div class="tr" style="top:165.1px"><div class="td ic" style="left:0;width:14px"><svg width="5.6" height="7" viewBox="0 0 6 7.5"><path d="M0,0.7 Q0,0 0.7,0 H3.6 L6,2.4 V6.8 Q6,7.5 5.3,7.5 H0.7 Q0,7.5 0,6.8 Z" fill="#1d3fae"/><path d="M3.6,0.3 V2.4 H5.7 Z" fill="#7d92d0"/><path d="M2.7,3.7 V6.3 M1.4,5 H4" stroke="#fff" stroke-width="1.1"/></svg></div><div class="td ip" style="left:14px;width:77px"><span class="t">88.208.248.162</span></div><div class="td num" style="left:91px;width:97.9px"><span class="t">29.54 GB</span></div><div class="td num" style="left:188.9px;width:76.29999999999998px"><span class="t">30.43 GB</span></div><div class="td num" style="left:265.2px;width:75.90000000000003px"><span class="t">33.84M</span></div><div class="td num" style="left:341.1px;width:85.79999999999995px"><span class="t">908.62 MB</span></div></div><div class="tr" style="top:185.5px"><div class="td ic" style="left:0;width:14px"><svg width="5.6" height="7" viewBox="0 0 6 7.5"><path d="M0,0.7 Q0,0 0.7,0 H3.6 L6,2.4 V6.8 Q6,7.5 5.3,7.5 H0.7 Q0,7.5 0,6.8 Z" fill="#1d3fae"/><path d="M3.6,0.3 V2.4 H5.7 Z" fill="#7d92d0"/><path d="M2.7,3.7 V6.3 M1.4,5 H4" stroke="#fff" stroke-width="1.1"/></svg></div><div class="td ip" style="left:14px;width:77px"><span class="t">174.133.126.130</span></div><div class="td num" style="left:91px;width:97.9px"><span class="t">24.3 GB</span></div><div class="td num" style="left:188.9px;width:76.29999999999998px"><span class="t">25.08 GB</span></div><div class="td num" style="left:265.2px;width:75.90000000000003px"><span class="t">29.49M</span></div><div class="td num" style="left:341.1px;width:85.79999999999995px"><span class="t">801.75 MB</span></div></div><div class="tr" style="top:205.9px"><div class="td ic" style="left:0;width:14px"><svg width="5.6" height="7" viewBox="0 0 6 7.5"><path d="M0,0.7 Q0,0 0.7,0 H3.6 L6,2.4 V6.8 Q6,7.5 5.3,7.5 H0.7 Q0,7.5 0,6.8 Z" fill="#1d3fae"/><path d="M3.6,0.3 V2.4 H5.7 Z" fill="#7d92d0"/><path d="M2.7,3.7 V6.3 M1.4,5 H4" stroke="#fff" stroke-width="1.1"/></svg></div><div class="td ip" style="left:14px;width:77px"><span class="t">72.52.142.199</span></div><div class="td num" style="left:91px;width:97.9px"><span class="t">23.46 GB</span></div><div class="td num" style="left:188.9px;width:76.29999999999998px"><span class="t">24.1 GB</span></div><div class="td num" style="left:265.2px;width:75.90000000000003px"><span class="t">27.58M</span></div><div class="td num" style="left:341.1px;width:85.79999999999995px"><span class="t">655.64 MB</span></div></div><div class="tr" style="top:226.3px"><div class="td ic" style="left:0;width:14px"><svg width="5.6" height="7" viewBox="0 0 6 7.5"><path d="M0,0.7 Q0,0 0.7,0 H3.6 L6,2.4 V6.8 Q6,7.5 5.3,7.5 H0.7 Q0,7.5 0,6.8 Z" fill="#1d3fae"/><path d="M3.6,0.3 V2.4 H5.7 Z" fill="#7d92d0"/><path d="M2.7,3.7 V6.3 M1.4,5 H4" stroke="#fff" stroke-width="1.1"/></svg></div><div class="td ip" style="left:14px;width:77px"><span class="t">67.15.47.4</span></div><div class="td num" style="left:91px;width:97.9px"><span class="t">22.34 GB</span></div><div class="td num" style="left:188.9px;width:76.29999999999998px"><span class="t">22.95 GB</span></div><div class="td num" style="left:265.2px;width:75.90000000000003px"><span class="t">25.86M</span></div><div class="td num" style="left:341.1px;width:85.79999999999995px"><span class="t">622.43 MB</span></div></div><div class="tr" style="top:246.7px"><div class="td ic" style="left:0;width:14px"><svg width="5.6" height="7" viewBox="0 0 6 7.5"><path d="M0,0.7 Q0,0 0.7,0 H3.6 L6,2.4 V6.8 Q6,7.5 5.3,7.5 H0.7 Q0,7.5 0,6.8 Z" fill="#1d3fae"/><path d="M3.6,0.3 V2.4 H5.7 Z" fill="#7d92d0"/><path d="M2.7,3.7 V6.3 M1.4,5 H4" stroke="#fff" stroke-width="1.1"/></svg></div><div class="td ip" style="left:14px;width:77px"><span class="t">4.71.173.89</span></div><div class="td num" style="left:91px;width:97.9px"><span class="t">21.58 GB</span></div><div class="td num" style="left:188.9px;width:76.29999999999998px"><span class="t">22.42 GB</span></div><div class="td num" style="left:265.2px;width:75.90000000000003px"><span class="t">31.11M</span></div><div class="td num" style="left:341.1px;width:85.79999999999995px"><span class="t">857.34 MB</span></div></div><div class="tr" style="top:267.1px"><div class="td ic" style="left:0;width:14px"><svg width="5.6" height="7" viewBox="0 0 6 7.5"><path d="M0,0.7 Q0,0 0.7,0 H3.6 L6,2.4 V6.8 Q6,7.5 5.3,7.5 H0.7 Q0,7.5 0,6.8 Z" fill="#1d3fae"/><path d="M3.6,0.3 V2.4 H5.7 Z" fill="#7d92d0"/><path d="M2.7,3.7 V6.3 M1.4,5 H4" stroke="#fff" stroke-width="1.1"/></svg></div><div class="td ip" style="left:14px;width:77px"><span class="t">142.166.14.85</span></div><div class="td num" style="left:91px;width:97.9px"><span class="t">21.5 GB</span></div><div class="td num" style="left:188.9px;width:76.29999999999998px"><span class="t">22.12 GB</span></div><div class="td num" style="left:265.2px;width:75.90000000000003px"><span class="t">24.69M</span></div><div class="td num" style="left:341.1px;width:85.79999999999995px"><span class="t">634.14 MB</span></div></div><div class="pag"><div class="pi dis" style="left:0.0px;width:19px;border-left:1px solid #ececec;border-radius:3px 0 0 3px;">««</div><div class="pi dis" style="left:19.0px;width:15px;">«</div><div class="pi act" style="left:34.0px;width:16px;">1</div><div class="pi " style="left:50.0px;width:15px;">2</div><div class="pi " style="left:65.0px;width:15.6px;">3</div><div class="pi " style="left:80.6px;width:14.8px;">4</div><div class="pi " style="left:95.4px;width:16px;">5</div><div class="pi " style="left:111.4px;width:16.2px;">...</div><div class="pi " style="left:127.6px;width:19px;">10</div><div class="pi " style="left:146.6px;width:15.4px;">»</div><div class="pi " style="left:162.0px;width:18.6px;border-radius:0 3px 3px 0;">»»</div></div><div class="pp" style="left:385.9px"><svg width="5.5" height="5" viewBox="0 0 5.5 5"><path d="M0,0.5 H5.5 M0,2.5 H5.5 M0,4.5 H5.5" stroke="#666" stroke-width="0.8"/></svg><span>10</span><span class="c2"></span></div></div>
</body></html>
